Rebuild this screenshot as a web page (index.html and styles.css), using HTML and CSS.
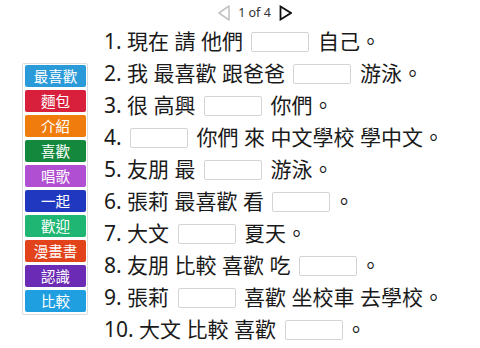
FILE: index.html
```html
<!DOCTYPE html>
<html lang="zh-Hant">
<head>
<meta charset="utf-8">
<link rel="stylesheet" href="styles.css">
</head>
<body>
<div class="page">
  <header class="nav">
    <svg class="arrow" width="12" height="16" viewBox="0 0 12 16"><polygon points="11,1 11,15 1,8" fill="none" stroke="#c4c4c4" stroke-width="1.6" stroke-linejoin="round"/></svg>
    <span class="count">1 of 4</span>
    <svg class="arrow" width="13" height="16" viewBox="0 0 13 16"><polygon points="1.5,1.5 1.5,14.5 12,8" fill="none" stroke="#111" stroke-width="1.8" stroke-linejoin="miter"/></svg>
  </header>
  <main class="main">
    <aside class="bank">
      <div class="tile c1">最喜歡</div>
      <div class="tile c2">麵包</div>
      <div class="tile c3">介紹</div>
      <div class="tile c4">喜歡</div>
      <div class="tile c5">唱歌</div>
      <div class="tile c6">一起</div>
      <div class="tile c7">歡迎</div>
      <div class="tile c8">漫畫書</div>
      <div class="tile c9">認識</div>
      <div class="tile c10">比較</div>
    </aside>
    <ol class="questions">
      <li>1. 現在 請 他們 <span class="blank"></span> 自己。</li>
      <li>2. 我 最喜歡 跟爸爸 <span class="blank"></span> 游泳。</li>
      <li>3. 很 高興 <span class="blank"></span> 你們。</li>
      <li>4. <span class="blank"></span> 你們 來 中文學校 學中文。</li>
      <li>5. 友朋 最 <span class="blank"></span> 游泳。</li>
      <li>6. 張莉 最喜歡 看 <span class="blank"></span>。</li>
      <li>7. 大文 <span class="blank"></span> 夏天。</li>
      <li>8. 友朋 比較 喜歡 吃 <span class="blank"></span>。</li>
      <li>9. 張莉 <span class="blank"></span> 喜歡 坐校車 去學校。</li>
      <li>10. 大文 比較 喜歡 <span class="blank"></span>。</li>
    </ol>
  </main>
</div>
</body>
</html>
```

FILE: styles.css
```css
* { box-sizing: border-box; }
html, body {
  margin: 0;
  padding: 0;
  background: #fff;
  width: 480px;
  height: 348px;
  overflow: hidden;
}
body {
  font-family: "Noto Sans", "Noto Sans CJK TC", sans-serif;
  color: #1a1a1a;
}
.nav {
  height: 25px;
  display: flex;
  align-items: center;
  justify-content: center;
  padding-left: 30px;
  gap: 8px;
}
.arrow { display: block; }
.count {
  font-size: 12.5px;
  color: #333;
  line-height: 16px;
}
.main {
  display: flex;
  align-items: flex-start;
}
.bank {
  margin: 38px 0 0 22px;
  width: 66px;
  border: 1px solid #dcdcdc;
  border-radius: 2px;
  padding: 1px 1px 2px 2px;
  display: flex;
  flex-direction: column;
  gap: 3px;
}
.tile {
  height: 22px;
  border-radius: 2px;
  color: #fff;
  font-family: "Noto Sans CJK TC", sans-serif;
  font-size: 14.5px;
  line-height: 22px;
  text-align: center;
}
.c1 { background: #2b9ad9; }
.c2 { background: #d81f3b; }
.c3 { background: #f07c0e; }
.c4 { background: #14893d; }
.c5 { background: #b04fd1; }
.c6 { background: #2038c0; }
.c7 { background: #1eb672; }
.c8 { background: #e2431a; }
.c9 { background: #6b2bb5; }
.c10 { background: #1f9fe0; }
.questions {
  list-style: none;
  margin: 0 0 0 16px;
  padding: 0;
  font-size: 21px;
  line-height: 32px;
  white-space: nowrap;
}
.questions li { height: 32px; }
.blank {
  display: inline-block;
  width: 58px;
  height: 20px;
  border: 1px solid #d4d4d4;
  border-radius: 2px;
  background: #fff;
  vertical-align: -3px;
  margin: 0 3px;
}
```
